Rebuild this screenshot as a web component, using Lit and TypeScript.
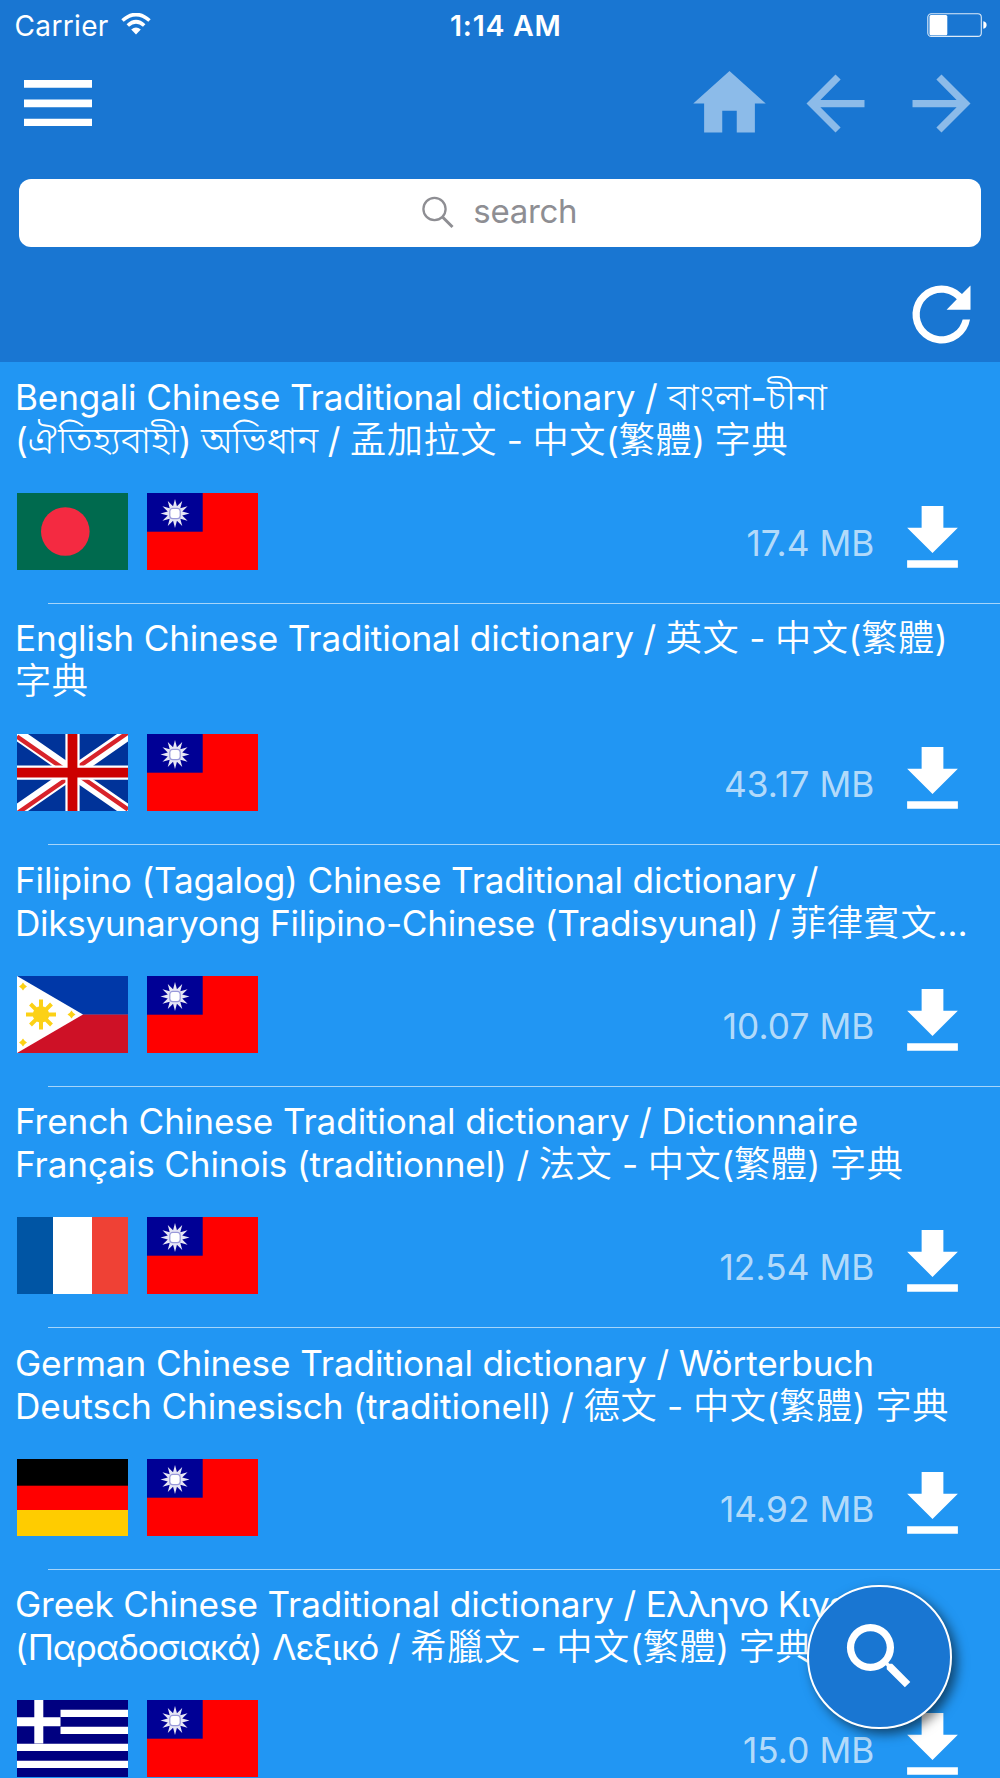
import { LitElement, html, svg, css, SVGTemplateResult } from "lit";
import { customElement, property } from "lit/decorators.js";

type FlagCode = "bd" | "gb" | "ph" | "fr" | "de" | "gr" | "tw";

interface Dictionary {
  lines: string[];
  spacing: number[];
  from: FlagCode;
  size: string;
}

const dictionaries: Dictionary[] = [
  {
    lines: ["Bengali Chinese Traditional dictionary / বাংলা-চীনা", "(ঐতিহ্যবাহী) অভিধান / 孟加拉文 - 中文(繁體) 字典"],
    spacing: [-0.18, -0.2],
    from: "bd",
    size: "17.4 MB",
  },
  {
    lines: ["English Chinese Traditional dictionary / 英文 - 中文(繁體)", "字典"],
    spacing: [-0.15, 0],
    from: "gb",
    size: "43.17 MB",
  },
  {
    lines: ["Filipino (Tagalog) Chinese Traditional dictionary /", "Diksyunaryong Filipino-Chinese (Tradisyunal) / 菲律賓文…"],
    spacing: [-0.2, -0.3],
    from: "ph",
    size: "10.07 MB",
  },
  {
    lines: ["French Chinese Traditional dictionary / Dictionnaire", "Français Chinois (traditionnel) / 法文 - 中文(繁體) 字典"],
    spacing: [-0.13, -0.16],
    from: "fr",
    size: "12.54 MB",
  },
  {
    lines: ["German Chinese Traditional dictionary / Wörterbuch", "Deutsch Chinesisch (traditionell) / 德文 - 中文(繁體) 字典"],
    spacing: [-0.13, -0.1],
    from: "de",
    size: "14.92 MB",
  },
  {
    lines: ["Greek Chinese Traditional dictionary / Ελληνο Κινεζικό", "(Παραδοσιακά) Λεξικό / 希臘文 - 中文(繁體) 字典"],
    spacing: [-0.14, -0.13],
    from: "gr",
    size: "15.0 MB",
  },
];

const star = (cx: number, cy: number, points: number, outer: number, inner: number) =>
  Array.from({ length: points * 2 }, (_, i) => {
    const r = i % 2 ? inner : outer;
    const a = (i * Math.PI) / points - Math.PI / 2;
    return `${(cx + r * Math.cos(a)).toFixed(2)},${(cy + r * Math.sin(a)).toFixed(2)}`;
  }).join(" ");

const flags: Record<FlagCode, SVGTemplateResult> = {
  bd: svg`<rect width="111" height="77" fill="#006a4e"/><circle cx="48.3" cy="38.5" r="24.3" fill="#f42a41"/>`,
  gb: svg`<rect width="111" height="77" fill="#003399"/>
    <path d="M0 0L111 77M111 0L0 77" stroke="#fff" stroke-width="12.500"/>
    <path d="M0 2.5L55.5 41M111 -1.5L55.5 37M0 79.500L55.5 41M111 75.500L55.500 37" stroke="#d8232a" stroke-width="4.400"/>
    <path d="M55.500 0V77M0 38.700H111" stroke="#fff" stroke-width="14.200"/>
    <path d="M55.500 0V77M0 38.700H111" stroke="#c00" stroke-width="9.800"/>`,
  ph: svg`<rect width="111" height="38.500" fill="#0038a8"/><rect y="38.500" width="111" height="38.500" fill="#ce1126"/>
    <path d="M0 0L66 38.500L0 77z" fill="#fff"/>
    <circle cx="24" cy="38.500" r="8.300" fill="#fcd116"/>
    <path d="M24 23.500V53.500M9 38.500H39M13.500 28L34.500 49M34.500 28L13.500 49" stroke="#fcd116" stroke-width="4"/>
    <g fill="#fcd116"><polygon points=${star(6, 10.5, 4, 4, 2.4)}/><polygon points=${star(6, 66.5, 4, 4, 2.4)}/><polygon points=${star(54.5, 38.5, 4, 4, 2.4)}/></g>`,
  fr: svg`<rect width="36" height="77" fill="#0055a4"/><rect x="36" width="39" height="77" fill="#fff"/><rect x="75" width="36" height="77" fill="#ef4135"/>`,
  de: svg`<rect width="111" height="27" fill="#000"/><rect y="26.700" width="111" height="25" fill="#f00"/><rect y="51" width="111" height="26" fill="#fc0"/>`,
  gr: svg`<rect width="111" height="77" fill="#000080"/>
    <path d="M43.500 13.300H111M43.500 30.400H111M0 47.300H111M0 64.300H111" stroke="#fff" stroke-width="7.300"/>
    <path d="M0 21.800H43.500M21.800 0V43.600" stroke="#fff" stroke-width="9"/>`,
  tw: svg`<rect width="111" height="77" fill="#f00"/><rect width="55.700" height="38.700" fill="#000095"/>
    <polygon points=${star(28, 20.5, 12, 14.5, 7.5)} fill="#fff" fill-opacity=".9"/>
    <rect x="22.800" y="15.300" width="10.400" height="10.400" rx="3" fill="#fff" stroke="#9a9ada" stroke-width="1.200"/>`,
};

const icon = (d: string) => html`<svg class="icon" viewBox="0 0 24 24"><path fill="currentColor" d=${d} /></svg>`;

const HOME = "M10 20v-6h4v6h5v-8h3L12 3 2 12h3v8z";
const BACK = "M20 11H7.83l5.59-5.59L12 4l-8 8 8 8 1.41-1.41L7.830 13H20v-2z";
const FORWARD = "M12 4l-1.41 1.41L16.170 11H4v2h12.170l-5.580 5.590L12 20l8-8z";
const REFRESH =
  "M17.650 6.350A7.960 7.960 0 0 0 12 4a8 8 0 1 0 7.870 9.400H17.830A6 6 0 1 1 12 6c1.660 0 3.140.690 4.220 1.780L13.400 10.700H20V4z";
const DOWNLOAD = "M19 9h-4V3H9v6H5l7 7 7-7zM5 18v2.100h14v-2.100z";
const SEARCH =
  "M15.500 14h-.790l-.280-.270A6.471 6.471 0 0 0 16 9.500 6.500 6.500 0 1 0 9.500 16c1.610 0 3.090-.590 4.230-1.570l.270.280v.790l5 4.990L20.490 19l-4.990-5zm-6 0C7.010 14 5 11.990 5 9.500S7.010 5 9.500 5 14 7.010 14 9.500 11.990 14 9.500 14z";

const iconStyles = css`
  .icon {
    display: block;
    width: 87px;
    height: 87px;
    flex: none;
  }
`;

@customElement("status-bar")
class StatusBar extends LitElement {
  static styles = css`
    :host {
      display: grid;
      grid-template-columns: 1fr auto 1fr;
      align-items: center;
      height: 50px;
      padding: 0 13px 0 14.5px;
      font-size: 28px;
    }
    .carrier {
      display: flex;
      align-items: center;
      gap: 12px;
      letter-spacing: 0.35px;
      padding-top: 1px;
    }
    .time {
      font-weight: 600;
      font-size: 28.500px;
      letter-spacing: 0.700px;
      padding: 1px 0 0 10px;
    }
    .wifi {
      width: 30px;
      height: 22px;
      margin-top: -4px;
    }
    .battery {
      justify-self: end;
      width: 60px;
      height: 24px;
    }
  `;
  render() {
    return html`
      <div class="carrier">
        <span>Carrier</span>
        <svg class="wifi" viewBox="0 0 30 22">
          <path d="M1.500 7.500Q15 -4.500 28.500 7.500M6.800 12.500Q15 5 23.200 12.500" fill="none" stroke="#fff" stroke-width="3.600" />
          <path d="M15 21.500L10.200 16.600Q15 12.400 19.800 16.600z" fill="#fff" />
        </svg>
      </div>
      <div class="time">1:14 AM</div>
      <svg class="battery" viewBox="0 0 60 24">
        <rect x=".8" y=".8" width="53.500" height="22.600" rx="3.500" fill="none" stroke="#fff" stroke-opacity=".85" stroke-width="1.100" />
        <rect x="2.500" y="2" width="17.800" height="20.200" rx="1.500" fill="#fff" />
        <path d="M56.300 8.300Q59.600 9 59.600 12T56.300 15.700z" fill="#fff" />
      </svg>
    `;
  }
}

@customElement("app-toolbar")
class AppToolbar extends LitElement {
  static styles = [
    iconStyles,
    css`
      :host {
        display: block;
      }
      .nav {
        display: flex;
        align-items: center;
        justify-content: space-between;
        height: 87px;
        padding: 10px 15.300px 0 24px;
      }
      .menu {
        width: 68px;
        height: 46.5px;
        margin-bottom: 1.500px;
      }
      .links {
        display: flex;
        gap: 19px;
        color: rgba(255, 255, 255, 0.5);
      }
      .search {
        display: flex;
        align-items: center;
        justify-content: center;
        gap: 19.500px;
        height: 68px;
        margin: 31.500px 19.3px 0;
        padding-right: 1px;
        box-sizing: border-box;
        border-radius: 12px;
        background: #fff;
        color: #8e8e93;
        font-size: 33px;
        letter-spacing: -0.300px;
      }
      .search span {
        padding-bottom: 3px;
      }
      .glass {
        width: 32px;
        height: 33px;
      }
      .actions {
        display: flex;
        justify-content: flex-end;
        padding: 24px 15.300px 4.5px;
      }
    `,
  ];
  render() {
    return html`
      <div class="nav">
        <svg class="menu" viewBox="0 0 18 12" preserveAspectRatio="none">
          <path fill="#fff" d="M0 0h18v2H0zM0 5h18v2H0zM0 10h18v2H0z" />
        </svg>
        <div class="links">${icon(HOME)}${icon(BACK)}${icon(FORWARD)}</div>
      </div>
      <div class="search">
        <svg class="glass" viewBox="0 0 32 33" fill="none" stroke="#8e8e93">
          <circle cx="12.500" cy="13" r="11.100" stroke-width="2.300" />
          <path d="M20.500 21L30.500 31" stroke-width="3" />
        </svg>
        <span>search</span>
      </div>
      <div class="actions">${icon(REFRESH)}</div>
    `;
  }
}

@customElement("dictionary-row")
class DictionaryRow extends LitElement {
  @property({ attribute: false }) item!: Dictionary;

  static styles = [
    iconStyles,
    css`
      :host {
        display: flex;
        flex-direction: column;
        height: 241.500px;
        flex: none;
        box-sizing: border-box;
        padding-top: 13.800px;
      }
      .line {
        height: 43px;
        line-height: 43px;
        padding-left: 15px;
        white-space: pre;
      }
      .run {
        line-height: 0;
      }
      .cjk {
        font-family: "Noto Sans CJK TC", sans-serif;
        font-weight: 350;
        font-size: 36.200px;
        letter-spacing: 0.600px;
      }
      .bengali {
        font-weight: 350;
        font-size: 37.500px;
        letter-spacing: 0;
      }
      .line + .line .bengali {
        font-size: 36.400px;
      }
      .greek {
        letter-spacing: -1px;
      }
      .details {
        display: flex;
        align-items: flex-start;
        height: 110px;
        margin-top: 31.200px;
        padding: 0 24px 0 17px;
      }
      .flag {
        width: 111px;
        height: 77px;
        margin-right: 19.300px;
        flex: none;
      }
      .size {
        margin-left: auto;
        margin-right: 14.500px;
        padding-top: 29px;
        line-height: 43px;
        color: rgba(255, 255, 255, 0.68);
        letter-spacing: 0.100px;
      }
      .download {
        margin-top: 2px;
      }
      .rule {
        height: 1px;
        flex: none;
        margin: auto 0 0 48px;
        background: rgba(255, 255, 255, 0.6);
      }
    `,
  ];

  private runs(text: string) {
    const parts =
      text.match(/[\u4e00-\u9fff]+|[\u0980-\u09ff]+|[\u0370-\u03ff]+|[^\u4e00-\u9fff\u0980-\u09ff\u0370-\u03ff]+/g) ?? [];
    const script = (part: string) =>
      /[\u4e00-\u9fff]/.test(part) ? "cjk" : /[\u0980-\u09ff]/.test(part) ? "bengali" : /[\u0370-\u03ff]/.test(part) ? "greek" : "latin";
    return parts.map((part) => html`<span class="run ${script(part)}">${part}</span>`);
  }

  private flag(code: FlagCode) {
    return html`<svg class="flag" viewBox="0 0 111 77">${flags[code]}</svg>`;
  }

  render() {
    const { lines, spacing, from, size } = this.item;
    return html`
      ${lines.map((line, i) => html`<div class="line" style="letter-spacing:${spacing[i]}px">${this.runs(line)}</div>`)}
      <div class="details">
        ${this.flag(from)}${this.flag("tw")}
        <span class="size">${size}</span>
        <div class="download">${icon(DOWNLOAD)}</div>
      </div>
      <div class="rule"></div>
    `;
  }
}

@customElement("app-root")
class AppRoot extends LitElement {
  static styles = [
    iconStyles,
    css`
      :host {
        display: flex;
        flex-direction: column;
        position: relative;
        width: 1000px;
        height: 1778px;
        overflow: hidden;
        background: #2196f3;
        color: #fff;
        font-family: Inter, "Noto Sans Bengali", "Noto Sans CJK TC", sans-serif;
        font-size: 35.200px;
      }
      .header {
        flex: none;
        height: 362px;
        background: #1976d2;
      }
      .list {
        display: flex;
        flex-direction: column;
      }
      .fab {
        position: absolute;
        left: 807px;
        top: 1584.500px;
        width: 144.500px;
        height: 144.500px;
        box-sizing: border-box;
        display: flex;
        align-items: center;
        justify-content: center;
        border: 2.400px solid #fff;
        border-radius: 50%;
        background: #1976d2;
        box-shadow: 5px 5px 12px rgba(0, 0, 0, 0.55);
      }
    `,
  ];
  render() {
    return html`
      <div class="header">
        <status-bar></status-bar>
        <app-toolbar></app-toolbar>
      </div>
      <div class="list">${dictionaries.map((item) => html`<dictionary-row .item=${item}></dictionary-row>`)}</div>
      <div class="fab">${icon(SEARCH)}</div>
    `;
  }
}
